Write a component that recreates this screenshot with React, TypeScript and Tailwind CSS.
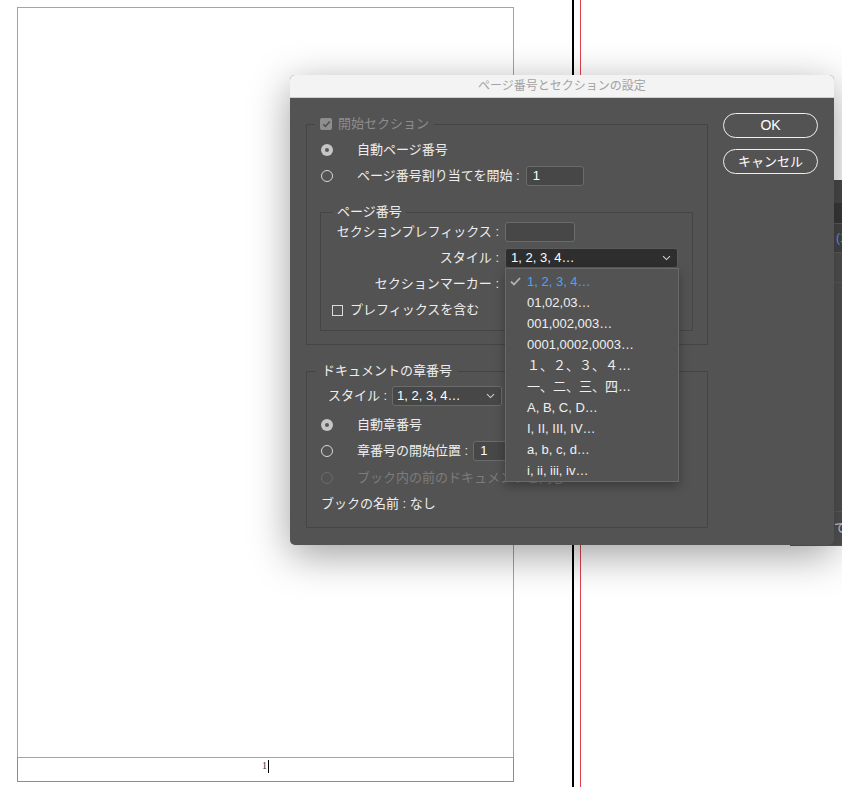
import React from 'react';

// Page number & section options dialog over an InDesign-like page

const Radio = ({ on, dim }: { on?: boolean; dim?: boolean }) =>
  on ? (
    <span className="flex h-3 w-3 shrink-0 items-center justify-center rounded-full bg-[#c6c6c6]">
      <span className="h-[4px] w-[4px] rounded-full bg-[#595959]" />
    </span>
  ) : (
    <span
      className={`h-3 w-3 shrink-0 rounded-full border ${dim ? 'border-[#6c6c6c]' : 'border-[#d8d8d8]'}`}
    />
  );

const Chevron = () => (
  <svg width="9" height="6" viewBox="0 0 9 6" className="shrink-0">
    <path d="M1 1.2 4.5 4.6 8 1.2" fill="none" stroke="#cfcfcf" strokeWidth="1.1" />
  </svg>
);

const Field = ({ w, value }: { w: string; value?: string }) => (
  <div
    className={`${w} flex h-[20px] items-center rounded-[3px] border border-[#6b6b6b] bg-[#474747] pl-[6px] text-[13px] text-white`}
  >
    {value}
  </div>
);

const LabelRow = ({ label, children }: { label: string; children?: React.ReactNode }) => (
  <div className="flex h-5 items-center gap-[6px]">
    <span className="w-[178px] text-right">{label}</span>
    {children}
  </div>
);

const menuItems = [
  '1, 2, 3, 4…',
  '01,02,03…',
  '001,002,003…',
  '0001,0002,0003…',
  '１、２、３、４…',
  '一、二、三、四…',
  'A, B, C, D…',
  'I, II, III, IV…',
  'a, b, c, d…',
  'i, ii, iii, iv…',
];

export default function App() {
  return (
    <div className="relative h-[787px] w-[842px] overflow-hidden bg-white font-['Liberation_Sans','Noto_Sans_CJK_JP',sans-serif]">
      {/* document page */}
      <div className="absolute left-[17px] top-[7px] flex h-[775px] w-[497px] flex-col border-x border-t border-x-[#d67fd0] border-t-[#9e98f2]">
        <div className="flex-1" />
        <div className="-mx-px flex h-[25px] justify-center border border-[#5b93ee] border-t-[#9e98f2] pt-[2px]">
          <span className="font-['Liberation_Serif',serif] text-[10px] leading-[12px] text-[#333]">1</span>
          <span className="ml-[1px] h-[13px] w-px bg-black" />
        </div>
      </div>

      {/* spread guides */}
      <div className="absolute left-[572px] top-0 h-full w-[2px] bg-black" />
      <div className="absolute left-[580px] top-0 h-full w-px bg-[#e2404f]" />

      {/* panel behind the dialog */}
      <div className="absolute left-[790px] top-[180px] flex h-[366px] w-[52px] flex-col bg-[#535353]">
        <div className="h-[23px] bg-[#4b4b4b]" />
        <div className="h-[20px] bg-[#3b3b3b]" />
        <div className="flex h-[30px] items-center border-y border-[#5e5e5e] bg-[#474747] pl-[46px] text-[12px] text-[#5aa8f0]">
          (1
        </div>
        <div className="h-[30px] border-b border-[#5e5e5e]" />
        <div className="flex-1 border-b border-[#5e5e5e]" />
        <div className="flex h-[34px] items-center border-b border-[#5e5e5e] pl-[44px] text-[12px] text-[#ddd]">て</div>
      </div>

      {/* dialog */}
      <div className="absolute left-[290px] top-[75px] h-[470px] w-[544px] overflow-hidden rounded-[5px] bg-[#535353] text-[13px] text-[#eeeeee] shadow-[0_10px_40px_rgba(0,0,0,0.38)]">
        <div className="flex h-[23px] items-center justify-center border-b border-[#cfcfcf] bg-[#f3f3f3] text-[12px] text-[#a2a2a2]">
          ページ番号とセクションの設定
        </div>

        <div className="flex gap-[15px] px-4 pt-[15px]">
          <div className="w-[403px] pt-[3px]">
            {/* section start */}
            <fieldset className="border border-[#454545] pb-[13px]">
              <legend className="ml-[8px] h-4 px-[5px] leading-4">
                <span className="flex items-center gap-[6px] text-[#8d8d8d]">
                  <span className="flex h-3 w-3 items-center justify-center rounded-[2px] bg-[#8e8e8e]">
                    <svg width="9" height="8" viewBox="0 0 9 8">
                      <path d="M1.2 4.2 3.5 6.4 7.8 1.4" fill="none" stroke="#505050" strokeWidth="1.5" />
                    </svg>
                  </span>
                  開始セクション
                </span>
              </legend>
              <div className="flex flex-col gap-[6px] pl-[14px] pt-2">
                <div className="flex h-5 items-center">
                  <Radio on />
                  <span className="ml-6">自動ページ番号</span>
                </div>
                <div className="flex h-5 items-center">
                  <Radio />
                  <span className="ml-6">ページ番号割り当てを開始 :</span>
                  <div className="ml-[6px]">
                    <Field w="w-[58px]" value="1" />
                  </div>
                </div>
              </div>

              <fieldset className="ml-[13px] mr-[14px] mt-[18px] border border-[#454545] pb-[10px]">
                <legend className="ml-[12px] h-4 px-[4px] leading-4">ページ番号</legend>
                <div className="flex flex-col gap-[6px] pt-[2px]">
                  <LabelRow label="セクションプレフィックス :">
                    <Field w="w-[70px]" />
                  </LabelRow>
                  <LabelRow label="スタイル :">
                    <div className="flex h-5 w-[173px] items-center justify-between rounded-[3px] border border-[#5a5a5a] bg-[#2e2e2e] pl-[5px] pr-[6px] text-[13px] text-white">
                      <span>1, 2, 3, 4…</span>
                      <Chevron />
                    </div>
                  </LabelRow>
                  <LabelRow label="セクションマーカー :" />
                  <div className="flex h-5 items-center pl-[11px]">
                    <span className="h-[11px] w-[11px] border border-[#dcdcdc]" />
                    <span className="ml-[7px]">プレフィックスを含む</span>
                  </div>
                </div>
              </fieldset>
            </fieldset>

            {/* document chapter numbering */}
            <fieldset className="mt-[18px] border border-[#454545] pb-[13px]">
              <legend className="ml-[9px] h-4 px-[6px] leading-4">ドキュメントの章番号</legend>
              <div className="flex flex-col pt-[7px]">
                <div className="flex h-5 items-center pl-[21px]">
                  <span className="w-[64px]">スタイル :</span>
                  <div className="flex h-5 w-[110px] items-center justify-between rounded-[3px] border border-[#6b6b6b] bg-[#474747] pl-[4px] pr-[6px] text-white">
                    <span>1, 2, 3, 4…</span>
                    <Chevron />
                  </div>
                </div>
                <div className="mt-[9px] flex h-5 items-center pl-[14px]">
                  <Radio on />
                  <span className="ml-6">自動章番号</span>
                </div>
                <div className="mt-[6px] flex h-5 items-center pl-[14px]">
                  <Radio />
                  <span className="ml-6">章番号の開始位置 :</span>
                  <div className="ml-[5px]">
                    <Field w="w-[58px]" value="1" />
                  </div>
                </div>
                <div className="mt-[7px] flex h-5 items-center pl-[14px] text-[#7c7c7c]">
                  <Radio dim />
                  <span className="ml-6">ブック内の前のドキュメントと同じ</span>
                </div>
                <div className="mt-[6px] flex h-5 items-center pl-[14px]">ブックの名前 : なし</div>
              </div>
            </fieldset>
          </div>

          <div className="flex w-[95px] flex-col gap-[11px]">
            <button className="h-[25px] rounded-full border-[1.5px] border-[#efefef] text-[14px] text-white">OK</button>
            <button className="h-[25px] rounded-full border-[1.5px] border-[#efefef] text-[13px] text-white">キャンセル</button>
          </div>
        </div>

        {/* open style menu */}
        <div className="absolute left-[215px] top-[193px] w-[174px] border border-[#696969] bg-[#535353] pt-[2px] shadow-[0_4px_10px_rgba(0,0,0,0.3)]">
          {menuItems.map((m, i) => (
            <div key={m} className="relative flex h-[21px] items-center pl-[21px]">
              {i === 0 && (
                <svg width="11" height="9" viewBox="0 0 11 9" className="absolute left-[4px] top-[6px]">
                  <path d="M1 4.6 4 7.5 10 1" fill="none" stroke="#b4b4b4" strokeWidth="1.8" />
                </svg>
              )}
              <span className={i === 0 ? 'text-[#4da3ee]' : 'text-[#f0f0f0]'}>{m}</span>
            </div>
          ))}
        </div>
      </div>
    </div>
  );
}
